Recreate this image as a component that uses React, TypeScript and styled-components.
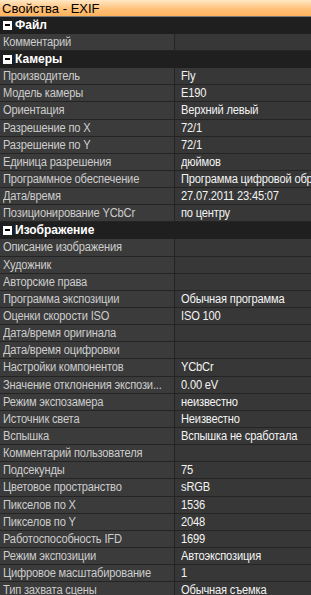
import React from "react";
import styled, { createGlobalStyle } from "styled-components";

const GlobalStyle = createGlobalStyle`
  html, body {
    margin: 0;
    padding: 0;
    background: #1e1e1e;
  }
  body {
    font-family: "Liberation Sans", Arial, sans-serif;
  }
`;

const Window = styled.div`
  width: 311px;
  height: 595px;
  overflow: hidden;
  display: flex;
  flex-direction: column;
  background: #1e1e1e;
`;

const TitleBar = styled.div`
  height: 16px;
  flex: none;
  display: flex;
  align-items: center;
  padding-left: 2px;
  background: linear-gradient(#ffe8c4, #ffc17a 55%, #ffb25c);
  border-bottom: 1px solid #7a7a7a;
  color: #000;
  font-size: 13px;
`;

const SectionHeader = styled.div`
  height: 16px;
  flex: none;
  display: flex;
  align-items: center;
  gap: 3px;
  padding-left: 3px;
  background: #1f1f1f;
  border-bottom: 1px solid #1f1f1f;
  color: #fff;
  font-size: 12px;
  font-weight: bold;
`;

const Toggle = styled.span`
  width: 9px;
  height: 9px;
  box-sizing: border-box;
  background: #fff;
  display: flex;
  align-items: center;
  justify-content: center;
  &::after {
    content: "";
    width: 5px;
    height: 2px;
    background: #000;
  }
`;

const Row = styled.div`
  height: 16.15px;
  flex: none;
  display: grid;
  grid-template-columns: 175px 1fr;
  border-bottom: 1px solid #242424;
  font-size: 12.5px;
`;

const Cell = styled.div<{ $value?: boolean }>`
  display: flex;
  align-items: center;
  padding-left: ${(p) => (p.$value ? "6px" : "3px")};
  background: ${(p) => (p.$value ? "#373737" : "#3b3b3b")};
  border-right: ${(p) => (p.$value ? "none" : "1px solid #242424")};
  color: ${(p) => (p.$value ? "#f4f4f4" : "#cdcdcd")};
  white-space: nowrap;
  overflow: hidden;
`;

// the grid's font is narrower than Arial, so squeeze the text a little
const Text = styled.span`
  display: inline-block;
  letter-spacing: -0.2px;
  transform: scaleX(0.89);
  transform-origin: left center;
`;

type Section = { title: string; rows: [string, string][] };

const sections: Section[] = [
  { title: "Файл", rows: [["Комментарий", ""]] },
  {
    title: "Камеры",
    rows: [
      ["Производитель", "Fly"],
      ["Модель камеры", "E190"],
      ["Ориентация", "Верхний левый"],
      ["Разрешение по X", "72/1"],
      ["Разрешение по Y", "72/1"],
      ["Единица разрешения", "дюймов"],
      ["Программное обеспечение", "Программа цифровой обработки"],
      ["Дата/время", "27.07.2011 23:45:07"],
      ["Позиционирование YCbCr", "по центру"],
    ],
  },
  {
    title: "Изображение",
    rows: [
      ["Описание изображения", ""],
      ["Художник", ""],
      ["Авторские права", ""],
      ["Программа экспозиции", "Обычная программа"],
      ["Оценки скорости ISO", "ISO 100"],
      ["Дата/время оригинала", ""],
      ["Дата/время оцифровки", ""],
      ["Настройки компонентов", "YCbCr"],
      ["Значение отклонения экспози...", "0.00 eV"],
      ["Режим экспозамера", "неизвестно"],
      ["Источник света", "Неизвестно"],
      ["Вспышка", "Вспышка не сработала"],
      ["Комментарий пользователя", ""],
      ["Подсекунды", "75"],
      ["Цветовое пространство", "sRGB"],
      ["Пикселов по X", "1536"],
      ["Пикселов по Y", "2048"],
      ["Работоспособность IFD", "1699"],
      ["Режим экспозиции", "Автоэкспозиция"],
      ["Цифровое масштабирование", "1"],
      ["Тип захвата сцены", "Обычная съемка"],
    ],
  },
];

export default function App() {
  return (
    <Window>
      <GlobalStyle />
      <TitleBar>Свойства - EXIF</TitleBar>
      {sections.map((s) => (
        <React.Fragment key={s.title}>
          <SectionHeader>
            <Toggle />
            {s.title}
          </SectionHeader>
          {s.rows.map(([label, value]) => (
            <Row key={label}>
              <Cell>
                <Text>{label}</Text>
              </Cell>
              <Cell $value>
                <Text>{value}</Text>
              </Cell>
            </Row>
          ))}
        </React.Fragment>
      ))}
    </Window>
  );
}
